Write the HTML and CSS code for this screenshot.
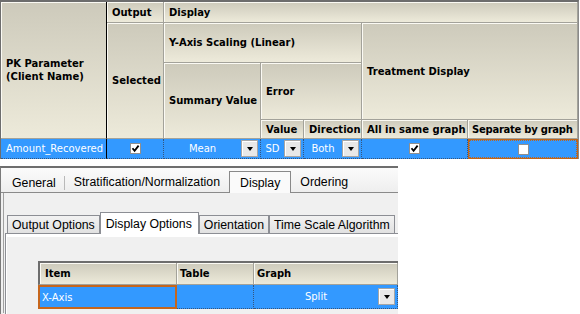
FILE: index.html
```html
<!DOCTYPE html>
<html lang="en">
<head>
    <title>PK Display Settings</title>
    <meta name="viewport" content="width=device-width, initial-scale=1.0">
    <link rel="stylesheet" href="styles.css">
</head>
<body>
    <div class="grid">
        <div class="hd pk">PK Parameter<br>(Client Name)</div>
        <div class="hd out">Output</div>
        <div class="hd disp">Display</div>
        <div class="hd sel">Selected</div>
        <div class="hd yaxis">Y-Axis Scaling (Linear)</div>
        <div class="hd treat">Treatment Display</div>
        <div class="hd summ">Summary Value</div>
        <div class="hd err">Error</div>
        <div class="hd">Value</div>
        <div class="hd">Direction</div>
        <div class="hd">All in same graph</div>
        <div class="hd tight">Separate by graph</div>

        <div class="cell name">Amount_Recovered</div>
        <div class="cell mid"><span class="cb"><svg viewBox="0 0 9 9"><path d="M1.5 4.2 L3.6 6.8 L7.6 1.6"/></svg></span></div>
        <div class="cell combo"><span class="txt">Mean</span><span class="dd"></span></div>
        <div class="cell combo"><span class="txt">SD</span><span class="dd"></span></div>
        <div class="cell combo"><span class="txt">Both</span><span class="dd"></span></div>
        <div class="cell mid"><span class="cb"><svg viewBox="0 0 9 9"><path d="M1.5 4.2 L3.6 6.8 L7.6 1.6"/></svg></span></div>
        <div class="cell mid focus"><span class="cb"></span></div>
    </div>

    <div class="panel">
        <div class="tabbar">
            <div class="tab sep">General</div>
            <div class="tab">Stratification/Normalization</div>
            <div class="tab on">Display</div>
            <div class="tab">Ordering</div>
        </div>
        <div class="page">
            <div class="itabs">
                <div class="itab">Output Options</div>
                <div class="itab on">Display Options</div>
                <div class="itab">Orientation</div>
                <div class="itab">Time Scale Algorithm</div>
            </div>
            <div class="ipage">
                <div class="grid2">
                    <div class="hd first">Item</div>
                    <div class="hd">Table</div>
                    <div class="hd">Graph</div>
                    <div class="cell name focus2">X-Axis</div>
                    <div class="cell"></div>
                    <div class="cell combo"><span class="txt">Split</span><span class="dd"></span></div>
                </div>
            </div>
        </div>
    </div>
</body>
</html>
```

FILE: styles.css
```css
* {
    box-sizing: border-box;
}
body {
    margin: 0;
    width: 580px;
    height: 314px;
    overflow: hidden;
    background: #fff;
    font-family: "DejaVu Sans", sans-serif;
}

/* top grid */
.grid {
    display: grid;
    grid-template-columns: 106px 57px 97px 43px 58px 106px 110px;
    grid-template-rows: 21px 40px 57px 19px 20px;
    width: 579px;
    border-top: 2px solid #6d6d6d;
    border-left: 1px solid #6d6d6d;
    border-right: 1px solid #8a8a8a;
}
.hd {
    display: flex;
    align-items: center;
    padding-left: 5px;
    background: linear-gradient(#cdcabb, #edeada);
    border-right: 1px solid #a3a29a;
    border-bottom: 1px solid #a3a29a;
    box-shadow: inset 1px 1px 0 #fbfaf4;
    font-size: 10px;
    font-weight: bold;
    line-height: 13px;
    color: #000;
    white-space: nowrap;
    overflow: hidden;
}
.hd.tight {
    padding-left: 4px;
    letter-spacing: -0.25px;
}
.pk {
    grid-column: 1;
    grid-row: 1 / 5;
    border-right: 1px solid #000;
}
.out { grid-column: 2; grid-row: 1; }
.disp { grid-column: 3 / 8; grid-row: 1; }
.sel { grid-column: 2; grid-row: 2 / 5; }
.yaxis { grid-column: 3 / 6; grid-row: 2; }
.treat { grid-column: 6 / 8; grid-row: 2 / 4; }
.summ { grid-column: 3; grid-row: 3 / 5; }
.err { grid-column: 4 / 6; grid-row: 3; }

.cell {
    display: flex;
    align-items: center;
    background: #3399ff;
    color: #fff;
    font-size: 10px;
    border-right: 1px dotted #35557d;
    border-bottom: 1px dotted #35557d;
    white-space: nowrap;
}
.grid .name {
    padding-left: 5px;
    border-right: 1px solid #000;
}
.mid {
    justify-content: center;
}
.combo .txt {
    flex: 1;
    text-align: center;
}
.dd {
    width: 17px;
    height: 17px;
    margin-right: 2px;
    display: flex;
    align-items: center;
    justify-content: center;
    background: #e8e8e8;
    border: 1px solid #a6a6a6;
    box-shadow: inset 1px 1px 0 #fff;
}
.dd::after {
    content: "";
    border-left: 3px solid transparent;
    border-right: 3px solid transparent;
    border-top: 4px solid #000;
}
.cb {
    width: 11px;
    height: 11px;
    border: 1px solid #8f8f8f;
    background: #fff;
    display: flex;
}
.cb svg {
    width: 9px;
    height: 9px;
    fill: none;
    stroke: #000;
    stroke-width: 1.8;
}
.focus {
    border: 1px solid #c0651a;
    outline: 1px dotted #c0651a;
    outline-offset: -2px;
}

/* bottom panel */
.panel {
    width: 398px;
    height: 148px;
    margin-top: 7px;
    overflow: hidden;
    border-top: 2px solid #6e6e6e;
    border-left: 1px solid #7a7a7a;
    background: #f0f0f0;
}
.tabbar {
    display: flex;
    align-items: flex-end;
    height: 25px;
    padding-left: 3px;
    border-bottom: 1px solid #8a8a8a;
    background: linear-gradient(#fbfbfb, #eeeeee);
}
.tab {
    height: 21px;
    padding: 0 9px;
    display: flex;
    align-items: center;
    font-family: "Liberation Sans", Arial, sans-serif;
    font-size: 12.3px;
    color: #000;
    white-space: nowrap;
}
.tab.sep {
    height: 14px;
    margin-bottom: 2px;
    padding: 0 8px 0 8px;
    border-right: 1px solid #b9b9b9;
}
.tab.on {
    padding: 0 10px;
    background: #fafafa;
    border: 1px solid #898989;
    border-bottom: none;
    margin-bottom: -1px;
    height: 22px;
}
.page {
    margin-left: 2px;
    height: 120px;
    padding: 19px 0 0 3px;
    border-left: 1px solid #a0a0a0;
}
.itabs {
    display: flex;
    align-items: flex-end;
    height: 21px;
}
.itab {
    height: 18px;
    padding: 0 4px;
    display: flex;
    align-items: center;
    font-family: "Liberation Sans", Arial, sans-serif;
    font-size: 12.3px;
    white-space: nowrap;
    background: linear-gradient(#f2f2f2, #e1e1e1);
    border: 1px solid #8c8e94;
    border-bottom: none;
}
.itab.on {
    position: relative;
    height: 22px;
    margin-bottom: -1px;
    padding: 0 6px 0 5px;
    background: #fff;
}
.ipage {
    height: 90px;
    margin-left: -2px;
    padding: 27px 0 0 32px;
    border-top: 1px solid #8c8e94;
    border-left: 1px solid #8c8e94;
    box-shadow: inset 1px 3px 0 #fff;
}
.grid2 {
    display: grid;
    grid-template-columns: 139px 77px 144px;
    grid-template-rows: 22px 24px;
    width: 360px;
    border-top: 2px solid #6d6d6d;
}
.grid2 .hd {
    padding-left: 3px;
}
.grid2 .first {
    padding-left: 5px;
    border-left: 2px solid #6d6d6d;
}
.focus2 {
    padding-left: 2px;
    border: 2px solid #c6661c;
}
```
